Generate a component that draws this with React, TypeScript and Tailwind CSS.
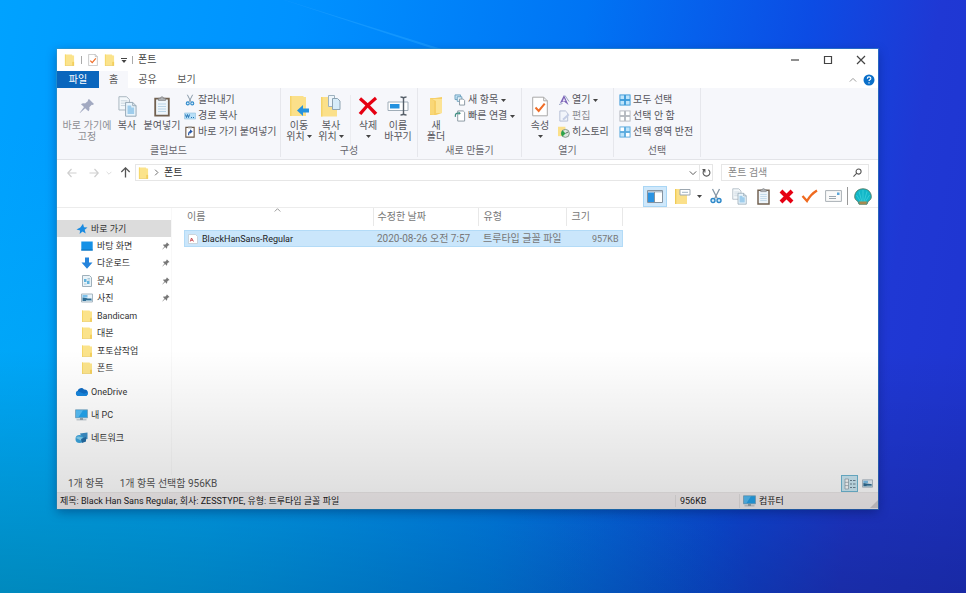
import { FC, ReactNode } from "react";

type IconProps = { className?: string };

const FolderIcon: FC<IconProps> = ({ className }) => (
  <svg viewBox="0 0 12 13" className={className} preserveAspectRatio="none">
    <path d="M1 .5h7.500l.8 1H11v11H1z" fill="#fbe38b" />
    <path d="M1 .5h1v12H1z" fill="#f6d667" />
    <path d="M9 8.500h2v4H9z" fill="#f3cf5d" />
    <path d="M1 12h10v.6H1z" fill="#e8c350" />
  </svg>
);

const CheckDocIcon: FC<IconProps> = ({ className }) => (
  <svg viewBox="0 0 16 20" className={className}>
    <path d="M.7.7h11l3.600 3.600v15H.7z" fill="#fff" stroke="#a9a9a9" />
    <path d="M11.700.7v3.600h3.600" fill="none" stroke="#a9a9a9" />
    <path d="m3.500 11 3.200 3.400 6-7.200" fill="none" stroke="#ef6c27" strokeWidth="2" />
  </svg>
);

const PinIcon: FC<IconProps> = ({ className }) => (
  <svg viewBox="0 0 16 16" className={className}>
    <path d="m10 1 5 5-1.300 1-.9-.3-2.500 2.600c.4 1.600.1 3-.9 4L6.200 10.200 1 15l-.300-.300L5 9 2 6.200c1-1 2.500-1.200 4-.800L9 3 8.800 2z" fill="currentColor" />
  </svg>
);

const CopyIcon: FC<IconProps> = ({ className }) => (
  <svg viewBox="0 0 20 22" className={className}>
    <path d="M1 .7h8l3 3v11H1z" fill="#f4f8fb" stroke="#a7b4be" />
    <path d="M3 5h7M3 7.500h7M3 10h7" stroke="#c6d3dc" />
    <path d="M8 6.700h7.500l3.500 3.500v11H8z" fill="#eaf5fc" stroke="#93a5b3" />
    <path d="M10 10h4v2h3v7h-7z" fill="#9fcdec" />
    <path d="M15.500 6.700v3.500H19" fill="none" stroke="#93a5b3" />
  </svg>
);

const PasteIcon: FC<IconProps> = ({ className }) => (
  <svg viewBox="0 0 16 21" className={className}>
    <path d="M1.200 2.700h13.600v17H1.200z" fill="#eef5fa" stroke="#71604f" strokeWidth="1.800" />
    <path d="M4.500 4.500V2.200h2a1.500 1.500 0 0 1 3 0h2v2.300z" fill="#aeb0b3" stroke="#77797c" strokeWidth=".6" />
    <path d="M4 8h8M4 10.500h8M4 13h8M4 15.500h8" stroke="#b8d3e5" />
  </svg>
);

const ScissorsIcon: FC<IconProps> = ({ className }) => (
  <svg viewBox="0 0 12 16" className={className}>
    <path d="m2.500 1 4.800 9.500M9.500 1 4.700 10.500" stroke="#8496a6" strokeWidth="1.300" />
    <circle cx="3" cy="12.500" r="2" fill="#d8eefb" stroke="#2b87c9" strokeWidth="1.400" />
    <circle cx="9" cy="12.500" r="2" fill="#d8eefb" stroke="#2b87c9" strokeWidth="1.400" />
  </svg>
);

const PathIcon: FC<IconProps> = ({ className }) => (
  <svg viewBox="0 0 12 12" className={className}>
    <path d="M.5 3h11v6H.5z" fill="#b8dff7" stroke="#8fbfdd" strokeWidth=".6" />
    <path d="m1.500 4.500 1 3 1-3 1 3 1-3" fill="none" stroke="#2375b5" />
    <path d="M7 7.500h1M9 7.500h1" stroke="#2375b5" />
  </svg>
);

const ShortcutIcon: FC<IconProps> = ({ className }) => (
  <svg viewBox="0 0 12 13" className={className}>
    <path d="M1.500 1.500h9v10.500h-9z" fill="#fff" stroke="#6c5847" strokeWidth="1.200" />
    <path d="M4 .5h4v2H4z" fill="#999" />
    <path d="M4.500 10c0-3 .5-4 2.500-4" fill="none" stroke="#2757a8" strokeWidth="1.300" />
    <path d="M6 3.600 9 6 6 8.300z" fill="#2757a8" />
  </svg>
);

const MoveToIcon: FC<IconProps> = ({ className }) => (
  <svg viewBox="0 0 20 22" className={className}>
    <path d="M1 1h13l1 1h2v19H1z" fill="#fbe08a" />
    <path d="M1 1h1.500v20H1z" fill="#f5d369" />
    <path d="m8 15.500 6-5.500v3.500h6v4h-6V21z" fill="#2492df" />
  </svg>
);

const CopyToIcon: FC<IconProps> = ({ className }) => (
  <svg viewBox="0 0 20 22" className={className}>
    <path d="M0 2h13l1 1h2v18.500H0z" fill="#fbe08a" />
    <path d="M0 2h1.500v19.500H0z" fill="#f5d369" />
    <path d="M7.500.5h6v11h-6z" fill="#eef6fb" stroke="#9fb2bf" />
    <path d="M11.500 3.500h5l2.500 2.500v8.500h-7.500z" fill="#d6ecf9" stroke="#8da3b2" />
  </svg>
);

const DeleteIcon: FC<IconProps> = ({ className }) => (
  <svg viewBox="0 0 20 20" className={className}>
    <path d="M2 2.500Q10 9 18 18M18 2Q9 9 2 18" fill="none" stroke="#e60012" strokeWidth="3.400" />
  </svg>
);

const RenameIcon: FC<IconProps> = ({ className }) => (
  <svg viewBox="0 0 22 20" className={className}>
    <path d="M1 6h20v8.500H1z" fill="#fff" stroke="#a0adb8" />
    <path d="M3 8h9.500v4.500H3z" fill="#2492df" />
    <path d="M13.500 1c2 0 3 .5 3 1.500 0-1 1-1.500 3-1.500M16.500 2.500v15M13.500 19c2 0 3-.5 3-1.500 0 1 1 1.500 3 1.500" fill="none" stroke="#555e68" strokeWidth="1.400" />
  </svg>
);

const NewFolderIcon: FC<IconProps> = ({ className }) => (
  <svg viewBox="0 0 14 20" className={className}>
    <path d="M1 2h5l7-1v16l-6 2H1z" fill="#f6cf68" />
    <path d="M3 3h10v14H7V5z" fill="#fce395" />
    <path d="M1 2v16l4 1V5z" fill="#f9d777" />
  </svg>
);

const NewItemIcon: FC<IconProps> = ({ className }) => (
  <svg viewBox="0 0 12 13" className={className}>
    <path d="M.6 1h6v5h-6z" fill="#c7e6f9" stroke="#6b9fbd" />
    <path d="M3 3h5v5H3z" fill="#e6f4fd" stroke="#6b9fbd" />
    <path d="M5.500 5.500h4l1.500 1.500v5h-5.500z" fill="#fff" stroke="#8796a1" />
  </svg>
);

const EasyAccessIcon: FC<IconProps> = ({ className }) => (
  <svg viewBox="0 0 12 13" className={className}>
    <path d="M3.500 1h6l1.500 1.500V12H3.500z" fill="#fff" stroke="#8796a1" />
    <path d="M1 7.500C.5 4 2 3 5 3.500" fill="none" stroke="#3c8c7f" strokeWidth="1.300" />
    <path d="m4.500 1.500 2.500 2-2.500 2z" fill="#3c8c7f" />
  </svg>
);

const OpenIcon: FC<IconProps> = ({ className }) => (
  <svg viewBox="0 0 12 12" className={className}>
    <path d="M6 1 2 9l4-1.500L10.500 11z" fill="#7a62b7" />
    <path d="M6 4 4.500 7.500l3-.5z" fill="#e6e0f5" />
    <path d="m1 10.500 3.500-1M7 1.500l4 6" stroke="#9ba5c4" />
  </svg>
);

const EditIcon: FC<IconProps> = ({ className }) => (
  <svg viewBox="0 0 12 13" className={className}>
    <path d="M1.500 1h6L10 3.500V12H1.500z" fill="#f2f5fb" stroke="#b2bcd3" />
    <path d="m5 9 5.500-5L12 5.500 6.500 10.500 4.500 11z" fill="#c4cde5" />
  </svg>
);

const HistoryIcon: FC<IconProps> = ({ className }) => (
  <svg viewBox="0 0 13 13" className={className}>
    <path d="M0 .8h8V11H0z" fill="#fbe08a" />
    <circle cx="8" cy="8" r="4.300" fill="#dce8df" stroke="#7e8f83" />
    <path d="M8 8 5 11.500A4.500 4.500 0 0 1 5 4.600z" fill="#2ca449" />
    <path d="m8 8 3-1.500" stroke="#506258" />
  </svg>
);

const SelectIcon: FC<IconProps & { fills: string[]; line: string }> = ({ className, fills, line }) => (
  <svg viewBox="0 0 13 13" className={className}>
    <rect x="1" y="1" width="5" height="5" fill={fills[0]} stroke={line} />
    <rect x="7" y="1" width="5" height="5" fill={fills[1]} stroke={line} />
    <rect x="1" y="7" width="5" height="5" fill={fills[2]} stroke={line} />
    <rect x="7" y="7" width="5" height="5" fill={fills[3]} stroke={line} />
  </svg>
);

const StarIcon: FC<IconProps> = ({ className }) => (
  <svg viewBox="0 0 12 12" className={className}>
    <path d="m7 .8 1 3.400 3.500.3-2.800 2.200 1 3.800L6.500 8.400 3.600 11l.5-3.500L.5 6.500l3.800-2z" fill="#1b8be0" />
  </svg>
);

const DesktopIcon: FC<IconProps> = ({ className }) => (
  <svg viewBox="0 0 12 12" className={className}>
    <path d="M.3 1.500h11.400v9H.3z" fill="#1591e6" />
    <path d="M.3 9.500h11.400v1H.3z" fill="#0d6fb8" />
  </svg>
);

const DownloadIcon: FC<IconProps> = ({ className }) => (
  <svg viewBox="0 0 12 12" className={className}>
    <path d="M4 .5h4v5h3.500L6 11.800.5 5.500H4z" fill="#2584dc" />
  </svg>
);

const DocumentIcon: FC<IconProps> = ({ className }) => (
  <svg viewBox="0 0 12 12" className={className}>
    <path d="M1.500.5h7l2 2v9h-9z" fill="#eaf3f8" stroke="#9fb0bb" />
    <path d="M3 4h2.500v3H3zM6 6h2.500v3H6z" fill="#62b2dc" />
    <path d="M6.500 3.500H9M3 9h2.500M6.500 5H9" stroke="#8fb7cc" strokeWidth=".7" />
  </svg>
);

const PictureIcon: FC<IconProps> = ({ className }) => (
  <svg viewBox="0 0 12 12" className={className}>
    <path d="M.5 2h11v8H.5z" fill="#e7f3fb" stroke="#a8b7c1" />
    <path d="M1.500 3h5v2.500h-5z" fill="#7cc0ea" />
    <path d="M1.500 5.500c3 0 5 1.500 9 1V9h-9z" fill="#2f6d94" />
    <path d="M5 8.300h5.500V9H5z" fill="#bfe0ee" />
  </svg>
);

const CloudIcon: FC<IconProps> = ({ className }) => (
  <svg viewBox="0 0 13 12" className={className}>
    <path d="M3 10a2.700 2.700 0 0 1-.3-5.200A3.600 3.600 0 0 1 9 3.500 3.200 3.200 0 0 1 12.800 7c0 1.800-1 3-2.500 3z" fill="#0f6cc4" />
    <path d="M2.600 4.900 9 7.700l3.600-1.500A2.800 2.800 0 0 1 10.300 10H3A2.700 2.700 0 0 1 2.600 4.900z" fill="#1786dd" />
  </svg>
);

const MonitorIcon: FC<IconProps> = ({ className }) => (
  <svg viewBox="0 0 13 12" className={className}>
    <path d="M.5.8h12v8H.5z" fill="#22a3ec" stroke="#7fa7bf" strokeWidth=".8" />
    <path d="M1 1.300h7L3.500 8.300H1z" fill="#56bdf5" />
    <path d="M5 9h3v1.500H5zM1.500 10.500h10v.8h-10z" fill="#94a5b0" />
  </svg>
);

const NetworkIcon: FC<IconProps> = ({ className }) => (
  <svg viewBox="0 0 13 12" className={className}>
    <path d="m5 1.500 7.500-1V7L8 8z" fill="#3c8fc7" />
    <circle cx="4.500" cy="7" r="4" fill="#3ba4dc" />
    <path d="M1 6c2-3 5-1 7-.5L6 8.500z" fill="#87d0ef" />
    <path d="m6 7 5-2v4.500L7 11z" fill="#246ca3" />
  </svg>
);

const FontFileIcon: FC<IconProps> = ({ className }) => (
  <svg viewBox="0 0 10 10" className={className}>
    <path d="M.5.5h7l2 2v7h-9z" fill="#fff" stroke="#c3cbd3" strokeWidth=".8" />
    <path d="M2.300 7.500 3.500 4l2 3.500M2.800 6.300h2" fill="none" stroke="#c4444c" strokeWidth=".9" />
  </svg>
);

const PaneIcon: FC<IconProps> = ({ className }) => (
  <svg viewBox="0 0 16 13" className={className}>
    <path d="M.5.5h15v12H.5z" fill="#fff" stroke="#8693a0" />
    <path d="M1 1h14v1.500H1z" fill="#b9c4cf" />
    <path d="M1 2.500h6v9.500H1z" fill="#2a93e2" />
    <path d="M7.500 2v10.500" stroke="#8693a0" />
  </svg>
);

const FolderViewIcon: FC<IconProps> = ({ className }) => (
  <svg viewBox="0 0 17 17" className={className}>
    <path d="M1 1h10l1 1.500h1V16H1z" fill="#fbe08a" />
    <path d="M1 1h1.300v15H1z" fill="#f0cb55" />
    <path d="M6 1.500h10v5.500H6z" fill="#fff" stroke="#9da7b0" />
    <path d="M8 4.300h6" stroke="#a2b5c4" />
  </svg>
);

const TickIcon: FC<IconProps> = ({ className }) => (
  <svg viewBox="0 0 17 14" className={className}>
    <path d="m1.500 7 4.500 5Q10 5 16 1.500" fill="none" stroke="#ef6a1f" strokeWidth="2.300" />
  </svg>
);

const MailIcon: FC<IconProps> = ({ className }) => (
  <svg viewBox="0 0 17 12" className={className}>
    <path d="M.6.6h15.800v10.800H.6z" fill="#fafafa" stroke="#a9b0b6" />
    <path d="M12 2.500h2.500v2.500H12z" fill="#5aa4d8" />
    <path d="M4 6.500h7M4 8.500h7" stroke="#9aa6af" />
  </svg>
);

const ShellIcon: FC<IconProps> = ({ className }) => (
  <svg viewBox="0 0 18 17" className={className}>
    <path d="M9 .8c5 0 8.300 3.500 8.300 8 0 2-1.300 3.700-3.300 4.700l-1 2.700H5l-1-2.700C2 12.500.7 10.800.7 8.800c0-4.500 3.300-8 8.300-8z" fill="#12b7c8" stroke="#557b62" strokeWidth=".9" />
    <path d="M9 2v12M5 3.500l3 10.500M13 3.500 10 14M2.500 7 7 14M15.500 7 11 14" stroke="#3fd0da" strokeWidth=".8" />
    <path d="M5 13.500h8l-.7 2.700H5.700z" fill="#a8894e" />
  </svg>
);

const HelpIcon: FC<IconProps> = ({ className }) => (
  <svg viewBox="0 0 12 12" className={className}>
    <circle cx="6" cy="6" r="5.500" fill="#0a6fc9" />
    <path d="M4.300 4.700c0-2.500 3.500-2.300 3.500-.3 0 1.400-1.800 1.300-1.800 2.700M6 8.300v1.200" fill="none" stroke="#fff" strokeWidth="1.100" />
  </svg>
);

const DetailsViewIcon: FC<IconProps> = ({ className }) => (
  <svg viewBox="0 0 12 12" className={className}>
    <path d="M1 1h3.500v10H1z" fill="#fff" stroke="#8d9ca6" strokeWidth=".7" />
    <path d="M1 4.300h3.500M1 7.600h3.500" stroke="#8d9ca6" strokeWidth=".7" />
    <path d="M6 2.500h2M9 2.500h2.500M6 6h2M9 6h2.500M6 9.500h2M9 9.500h2.500" stroke="#6d8494" />
  </svg>
);

const Caret: FC<IconProps> = ({ className = "" }) => (
  <svg viewBox="0 0 5 3" className={`h-[3px] w-[5px] shrink-0 ${className}`}>
    <path d="M0 0h5L2.500 3z" fill="#444" />
  </svg>
);

const Line: FC<IconProps & { d: string }> = ({ className, d }) => (
  <svg viewBox="0 0 10 10" className={className}>
    <path d={d} fill="none" stroke="currentColor" strokeWidth="1.200" />
  </svg>
);

const BigButton: FC<{ icon: ReactNode; lines: string[]; width: string; caret?: boolean; muted?: boolean }> = ({
  icon,
  lines,
  width,
  caret,
  muted,
}) => (
  <button className={`flex flex-col items-center ${width} ${muted ? "text-[#8d8d92]" : ""}`}>
    <span className="mb-[3px] flex h-[22px] items-center justify-center">{icon}</span>
    {lines.map((line, i) => (
      <span key={line} className="flex h-[11px] items-center gap-[2px] font-['Liberation_Sans','Noto_Sans_CJK_KR',sans-serif] leading-[11px] whitespace-nowrap">
        {line}
        {caret && lines.length > 1 && i === lines.length - 1 && <Caret />}
      </span>
    ))}
    {caret && lines.length === 1 && <Caret className="mt-[4px]" />}
  </button>
);

const SmallButton: FC<{ icon: ReactNode; label: string; caret?: boolean; muted?: boolean }> = ({
  icon,
  label,
  caret,
  muted,
}) => (
  <button className={`flex h-4 items-center gap-[2px] whitespace-nowrap ${muted ? "text-[#8d8d92]" : ""}`}>
    {icon}
    {label}
    {caret && <Caret className="ml-[1px]" />}
  </button>
);

const Group: FC<{ title: string; className: string; children: ReactNode }> = ({ title, className, children }) => (
  <section className="flex flex-col border-r border-[#e6e7ec] pt-[4px]">
    <div className={`flex h-[53px] ${className}`}>{children}</div>
    <h2 className="text-center leading-[12px] text-[#66666c]">{title}</h2>
  </section>
);

const small = "h-3 w-3 shrink-0";
const blue = "#bfe4fb";

const Ribbon: FC = () => (
  <div className="flex h-[72px] border-b border-[#e3e4e8] bg-[#f6f7fb] pb-[2px] text-[#55555b]">
    <Group title="클립보드" className="w-[223px] pl-[5px]">
      <div className="flex pt-[3px]">
        <BigButton icon={<PinIcon className="h-4 w-4 text-[#a2a9c1]" />} lines={["바로 가기에", "고정"]} width="w-[50px]" muted />
        <BigButton icon={<CopyIcon className="h-[21px] w-[19px]" />} lines={["복사"]} width="w-[30px]" />
        <BigButton icon={<PasteIcon className="h-[21px] w-4" />} lines={["붙여넣기"]} width="w-[40px]" />
      </div>
      <div className="ml-[2px] flex flex-col items-start">
        <SmallButton icon={<ScissorsIcon className={small} />} label="잘라내기" />
        <SmallButton icon={<PathIcon className={small} />} label="경로 복사" />
        <SmallButton icon={<ShortcutIcon className={small} />} label="바로 가기 붙여넣기" />
      </div>
    </Group>
    <Group title="구성" className="w-[136px] pt-[3px] pl-[2px]">
      <BigButton icon={<MoveToIcon className="h-[22px] w-5" />} lines={["이동", "위치"]} width="w-8" caret />
      <BigButton icon={<CopyToIcon className="h-[22px] w-5" />} lines={["복사", "위치"]} width="w-8" caret />
      <span className="mx-[3px] w-px bg-[#ebecf0]" />
      <BigButton icon={<DeleteIcon className="h-5 w-5" />} lines={["삭제"]} width="w-7" caret />
      <BigButton icon={<RenameIcon className="h-5 w-[22px]" />} lines={["이름", "바꾸기"]} width="w-8" />
    </Group>
    <Group title="새로 만들기" className="w-[103px] pl-[3px]">
      <div className="flex pt-[3px]">
        <BigButton icon={<NewFolderIcon className="h-5 w-[14px]" />} lines={["새", "폴더"]} width="w-[30px]" />
      </div>
      <div className="ml-[3px] flex flex-col items-start">
        <SmallButton icon={<NewItemIcon className={small} />} label="새 항목" caret />
        <SmallButton icon={<EasyAccessIcon className={small} />} label="빠른 연결" caret />
      </div>
    </Group>
    <Group title="열기" className="w-[91px] pl-[3px]">
      <div className="flex pt-[3px]">
        <BigButton icon={<CheckDocIcon className="h-[21px] w-4" />} lines={["속성"]} width="w-[30px]" caret />
      </div>
      <div className="ml-[3px] flex flex-col items-start">
        <SmallButton icon={<OpenIcon className={small} />} label="열기" caret />
        <SmallButton icon={<EditIcon className={small} />} label="편집" muted />
        <SmallButton icon={<HistoryIcon className={small} />} label="히스토리" />
      </div>
    </Group>
    <Group title="선택" className="w-[86px] flex-col items-start pl-[5px]">
      <SmallButton icon={<SelectIcon className={small} fills={[blue, blue, blue, blue]} line="#3b9ad9" />} label="모두 선택" />
      <SmallButton icon={<SelectIcon className={small} fills={["#fff", "#fff", "#fff", "#fff"]} line="#b4b8be" />} label="선택 안 함" />
      <SmallButton icon={<SelectIcon className={small} fills={["#fff", blue, blue, "#fff"]} line="#5aaade" />} label="선택 영역 반전" />
    </Group>
  </div>
);

const TitleBar: FC = () => (
  <header className="flex h-[22px] items-center pr-[12px] pl-[7px] text-[#444]">
    <FolderIcon className="h-3 w-[11px]" />
    <span className="mx-[6px] h-2 w-px bg-[#aaa]" />
    <CheckDocIcon className="h-3 w-[10px]" />
    <FolderIcon className="ml-[6px] h-3 w-[11px]" />
    <svg viewBox="0 0 6 5" className="ml-[6px] h-[5px] w-[6px]">
      <path d="M0 0h6v1H0zM.5 2h5L3 5z" fill="#444" />
    </svg>
    <span className="mx-[5px] h-2 w-px bg-[#aaa]" />
    <h1>폰트</h1>
    <div className="ml-auto flex items-center gap-[23px] text-[#444]">
      <button aria-label="최소화">
        <Line className="h-[10px] w-[10px]" d="M1 5h8" />
      </button>
      <button aria-label="최대화">
        <Line className="h-[10px] w-[10px]" d="M1.500 1.500h7v7h-7z" />
      </button>
      <button aria-label="닫기">
        <Line className="h-[10px] w-[10px]" d="m1 1 8 8M9 1 1 9" />
      </button>
    </div>
  </header>
);

const Tabs: FC = () => (
  <nav className="flex h-[17px] items-stretch text-[#555]">
    <button className="w-[42px] bg-[#0a66bd] text-white">파일</button>
    <button className="w-[29px] bg-[#f6f7fb]">홈</button>
    <button className="w-[39px]">공유</button>
    <button className="w-[39px]">보기</button>
    <div className="ml-auto flex items-center gap-[6px] pr-[3px]">
      <button aria-label="리본 최소화" className="text-[#999]">
        <Line className="h-2 w-2" d="m1 7 4-4 4 4" />
      </button>
      <button aria-label="도움말">
        <HelpIcon className="h-3 w-3" />
      </button>
    </div>
  </nav>
);

const AddressBar: FC = () => (
  <div className="flex h-[25px] items-center pr-[9px] pl-[10px] text-[#555]">
    <button aria-label="뒤로" className="w-[22px] text-[#cfcfcf]">
      <Line className="h-[10px] w-[10px]" d="M9.500 5h-9M4.500 1 .8 5l3.700 4" />
    </button>
    <button aria-label="앞으로" className="w-[17px] text-[#cfcfcf]">
      <Line className="h-[10px] w-[10px]" d="M.5 5h9M5.500 1l3.700 4-3.700 4" />
    </button>
    <button aria-label="최근 위치" className="w-[14px] text-[#cfcfcf]">
      <Line className="h-[6px] w-[6px]" d="m1 3 4 4 4-4" />
    </button>
    <button aria-label="위로" className="w-[15px]">
      <Line className="h-[11px] w-[11px]" d="M5 9.500v-9M1.200 4.500 5 .8l3.800 3.700" />
    </button>
    <div className="flex h-[17px] flex-1 items-center border border-[#e6e6e6] pl-[2px]">
      <FolderIcon className="h-3 w-[11px]" />
      <Line className="ml-[4px] h-[7px] w-[7px]" d="m3 1 4 4-4 4" />
      <button className="ml-[4px] text-[#333]">폰트</button>
      <button aria-label="이전 위치" className="ml-auto pr-[2px]">
        <Line className="h-2 w-2" d="m1 3 4 4 4-4" />
      </button>
      <button aria-label="새로 고침" className="flex h-full w-[13px] items-center justify-center border-l border-[#e6e6e6]">
        <Line className="h-[9px] w-[9px]" d="M3 2a3.800 3.800 0 1 0 4 0M3.200 5V1.800H.5" />
      </button>
    </div>
    <label className="ml-2 flex h-[17px] w-[148px] items-center border border-[#e6e6e6] px-[6px]">
      <input type="text" placeholder="폰트 검색" aria-label="폰트 검색" className="min-w-0 flex-1 outline-none placeholder:text-[#888]" />
      <Line className="h-[9px] w-[9px]" d="M4 6 .5 9.500M9 4a2.800 2.800 0 1 1-5.600 0A2.800 2.800 0 0 1 9 4z" />
    </label>
  </div>
);

const Toolbar: FC = () => (
  <div className="flex h-[23px] items-center justify-end border-b border-[#ececec] pr-[6px]">
    <button aria-label="탐색 창" className="flex h-[21px] w-6 items-center justify-center border border-[#a9d6f5] bg-[#cfe8fb]">
      <PaneIcon className="h-[13px] w-4" />
    </button>
    <button aria-label="레이아웃" className="ml-[7px] flex items-center gap-[6px]">
      <FolderViewIcon className="h-[17px] w-[17px]" />
      <Caret />
    </button>
    <button aria-label="잘라내기" className="ml-2">
      <ScissorsIcon className="h-4 w-3" />
    </button>
    <button aria-label="복사" className="ml-[10px]">
      <CopyIcon className="h-[17px] w-[15px]" />
    </button>
    <button aria-label="붙여넣기" className="ml-[10px]">
      <PasteIcon className="h-[17px] w-[13px]" />
    </button>
    <button aria-label="삭제" className="ml-[9px]">
      <svg viewBox="0 0 15 15" className="h-[15px] w-[15px]">
        <path d="m2 2 11 11M13 2 2 13" stroke="#e60012" strokeWidth="4" />
      </svg>
    </button>
    <button aria-label="속성" className="ml-[7px]">
      <TickIcon className="h-[14px] w-[17px]" />
    </button>
    <button aria-label="메일" className="ml-[7px]">
      <MailIcon className="h-3 w-[17px]" />
    </button>
    <span className="mx-[5px] h-[18px] w-px bg-[#999]" />
    <button aria-label="셸" className="ml-[1px]">
      <ShellIcon className="h-[17px] w-[18px]" />
    </button>
  </div>
);

const quickLinks = [
  { label: "바탕 화면", Icon: DesktopIcon, pinned: true },
  { label: "다운로드", Icon: DownloadIcon, pinned: true },
  { label: "문서", Icon: DocumentIcon, pinned: true },
  { label: "사진", Icon: PictureIcon, pinned: true },
  { label: "Bandicam", Icon: FolderIcon, pinned: false },
  { label: "대본", Icon: FolderIcon, pinned: false },
  { label: "포토샵작업", Icon: FolderIcon, pinned: false },
  { label: "폰트", Icon: FolderIcon, pinned: false },
];

const places = [
  { label: "OneDrive", Icon: CloudIcon },
  { label: "내 PC", Icon: MonitorIcon },
  { label: "네트워크", Icon: NetworkIcon },
];

const Sidebar: FC = () => (
  <aside className="w-[115px] shrink-0 border-r border-[#f8f8f8] pt-[12px] text-[9px] text-[#333]">
    <a href="#quick" className="flex h-[17px] items-center gap-[3px] bg-[#dcdcdc] pl-[19px]">
      <StarIcon className="h-3 w-3" />
      바로 가기
    </a>
    <ul className="flex h-[140px] flex-col">
      {quickLinks.map(({ label, Icon, pinned }) => (
        <li key={label} className="flex-1">
          <a href="#folder" className="flex h-full items-center gap-[4px] pr-[1px] pl-6">
            <Icon className="h-3 w-3" />
            {label}
            {pinned && <PinIcon className="ml-auto h-2 w-2 text-[#777]" />}
          </a>
        </li>
      ))}
    </ul>
    <ul className="mt-[3px]">
      {places.map(({ label, Icon }) => (
        <li key={label}>
          <a href="#place" className="flex h-[23px] items-center gap-[3px] pl-[18px]">
            <Icon className="h-3 w-[13px]" />
            {label}
          </a>
        </li>
      ))}
    </ul>
  </aside>
);

const FileList: FC = () => (
  <main className="flex-1 pl-[12px]">
    <table className="w-[439px] table-fixed text-left text-[#777]">
      <thead>
        <tr className="h-[18px]">
          <th className="relative w-[189px] border-r border-[#e8e8e8] pl-[3px] font-normal">
            이름
            <Line className="absolute top-0 left-[90px] h-[7px] w-[7px] text-[#888]" d="m1 5 4-4 4 4" />
          </th>
          <th className="w-[105px] border-r border-[#e8e8e8] pl-[4px] font-normal">수정한 날짜</th>
          <th className="w-[88px] border-r border-[#e8e8e8] pl-[5px] font-normal">유형</th>
          <th className="border-r border-[#e8e8e8] pl-[5px] font-normal">크기</th>
        </tr>
      </thead>
      <tbody className="before:block before:h-[4px]">
        <tr className="h-[17px] bg-[#cae6fb] outline outline-[#b3dbf7] -outline-offset-1">
          <td className="pl-[4px] text-[9px] text-[#222]">
            <span className="flex items-center gap-[4px]">
              <FontFileIcon className="h-[10px] w-[10px]" />
              BlackHanSans-Regular
            </span>
          </td>
          <td className="pl-[4px]">2020-08-26 오전 7:57</td>
          <td className="pl-[5px]">트루타입 글꼴 파일</td>
          <td className="pr-[4px] text-right text-[9px]">957KB</td>
        </tr>
      </tbody>
    </table>
  </main>
);

const App: FC = () => {
  return (
    <div className="relative flex min-h-screen bg-[radial-gradient(ellipse_at_0%_100%,rgba(0,180,235,0.75)_0%,rgba(0,160,240,0)_55%),linear-gradient(100deg,#00a2ff_0%,#0092ff_28%,#0074f4_55%,#0c4ce4_76%,#1f38d4_88%,#1f34d0_100%)] pt-[49px] pr-[88px] pb-[84px] pl-[57px] font-[Roboto,'Noto_Sans_CJK_KR',sans-serif] text-[10px] leading-[12px]">
      <svg viewBox="0 0 170 50" className="absolute top-0 left-[275px] h-[50px] w-[170px]">
        <path d="M0-3 170 50h-8z" fill="#1fa0ff" opacity=".6" />
      </svg>
      <div className="relative flex min-w-0 flex-1 flex-col bg-white shadow-[0_0_0_1px_rgba(60,150,190,0.5),0_3px_10px_rgba(0,20,80,0.4)]">
        <TitleBar />
        <Tabs />
        <Ribbon />
        <AddressBar />
        <Toolbar />
        <div className="flex flex-1">
          <Sidebar />
          <FileList />
        </div>
        <div className="flex h-[17px] items-center gap-4 pr-[5px] pl-[11px] text-[#555]">
          <span>1개 항목</span>
          <span>1개 항목 선택함 956KB</span>
          <button aria-label="자세히" className="ml-auto flex h-[17px] w-[17px] items-center justify-center border border-[#6fb8d4] bg-[#cdeaf5]">
            <DetailsViewIcon className="h-3 w-3" />
          </button>
          <button aria-label="큰 아이콘" className="-ml-3">
            <PictureIcon className="h-[11px] w-[11px]" />
          </button>
        </div>
        <footer className="flex h-[17px] items-center border-t border-[#ebe8e8] bg-[#f4f0f1] pl-[3px] text-[9px] text-[#222]">
          <span>제목: Black Han Sans Regular, 회사: ZESSTYPE, 유형: 트루타입 글꼴 파일</span>
          <span className="ml-auto w-[64px] border-l border-[#e2dfe0] pl-[4px]">956KB</span>
          <span className="flex w-[139px] items-center gap-[3px] border-l border-[#e2dfe0] pl-[3px]">
            <MonitorIcon className="h-3 w-[13px]" />
            컴퓨터
            <svg viewBox="0 0 8 8" className="mt-[6px] ml-auto h-2 w-2">
              <path d="M8 0v8H0z" fill="#cfccd0" />
            </svg>
          </span>
        </footer>
      </div>
      <div className="pointer-events-none absolute inset-x-0 bottom-0 h-[41%] bg-linear-to-t from-black/21 to-transparent" />
    </div>
  );
};

export default App;
